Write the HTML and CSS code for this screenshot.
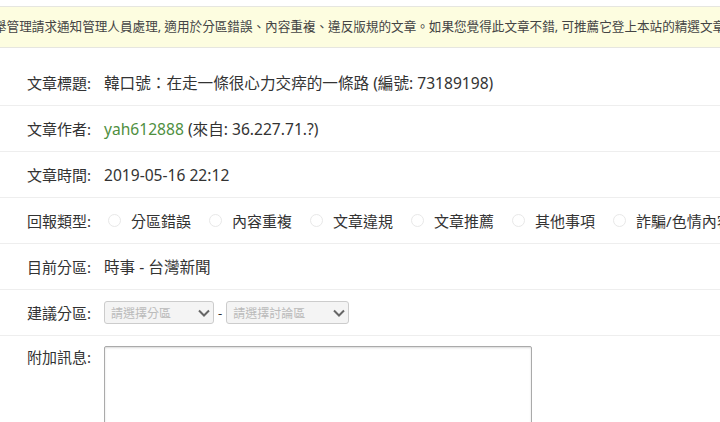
FILE: index.html
```html
<!DOCTYPE html>
<html>
<head>
    <meta charset="utf-8">
    <title>管理請求</title>
    <link rel="stylesheet" href="styles.css">
</head>
<body>
    <div class="notice">舉管理請求通知管理人員處理, 適用於分區錯誤、內容重複、違反版規的文章。如果您覺得此文章不錯, 可推薦它登上本站的精選文章。</div>

    <form class="report">
        <div class="row">
            <span class="label">文章標題:</span>
            <span class="value">韓口號：在走一條很心力交瘁的一條路 (編號: 73189198)</span>
        </div>
        <div class="row">
            <span class="label">文章作者:</span>
            <span class="value"><a class="author" href="#">yah612888</a> (來自: 36.227.71.?)</span>
        </div>
        <div class="row">
            <span class="label">文章時間:</span>
            <span class="value">2019-05-16 22:12</span>
        </div>
        <div class="row">
            <span class="label">回報類型:</span>
            <div class="options">
                <label class="option"><input type="radio" name="type">分區錯誤</label>
                <label class="option"><input type="radio" name="type">內容重複</label>
                <label class="option"><input type="radio" name="type">文章違規</label>
                <label class="option"><input type="radio" name="type">文章推薦</label>
                <label class="option"><input type="radio" name="type">其他事項</label>
                <label class="option"><input type="radio" name="type">詐騙/色情內容</label>
            </div>
        </div>
        <div class="row">
            <span class="label">目前分區:</span>
            <span class="value">時事 - 台灣新聞</span>
        </div>
        <div class="row">
            <span class="label">建議分區:</span>
            <div class="selects">
                <span class="select-wrap board">
                    <select disabled><option>請選擇分區</option></select>
                    <svg class="arrow" width="12" height="8" viewBox="0 0 12 8"><path d="M1 1.5 L6 6.5 L11 1.5" fill="none" stroke="#666" stroke-width="2"/></svg>
                </span>
                <span class="dash">-</span>
                <span class="select-wrap forum">
                    <select disabled><option>請選擇討論區</option></select>
                    <svg class="arrow" width="12" height="8" viewBox="0 0 12 8"><path d="M1 1.5 L6 6.5 L11 1.5" fill="none" stroke="#666" stroke-width="2"/></svg>
                </span>
            </div>
        </div>
        <div class="row row-top">
            <span class="label">附加訊息:</span>
            <textarea class="message"></textarea>
        </div>
    </form>
</body>
</html>
```

FILE: styles.css
```css
html, body {
    margin: 0;
    padding: 0;
    overflow: hidden;
}

body {
    background-color: #fff;
    color: #333;
    font-family: "Noto Sans", "Noto Sans CJK TC", sans-serif;
    font-size: 15px;
}

/* 上方提示 */
.notice {
    margin-top: 6px;
    height: 40px;
    line-height: 40px;
    background-color: #fdfde0;
    border-top: 1px solid #e6e6e0;
    border-bottom: 1px solid #e6e6e0;
    color: #444;
    font-size: 12.6px;
    white-space: nowrap;
    overflow: hidden;
    text-indent: -6px;
}

.report {
    padding-top: 12px;
}

.row {
    display: flex;
    align-items: center;
    height: 45px;
    border-bottom: 1px solid #eee;
    padding-left: 27px;
    white-space: nowrap;
}

.row-top {
    align-items: flex-start;
    height: auto;
    padding-top: 10px;
    border-bottom: none;
}

.label {
    width: 77px;
    flex-shrink: 0;
    line-height: 22px;
}

.value {
    line-height: 22px;
    font-size: 15.6px;
}

.author {
    color: #4f8f3f;
    text-decoration: none;
}

.options {
    display: flex;
    align-items: center;
}

.option {
    display: flex;
    align-items: center;
    margin-right: 14px;
}

.option input {
    appearance: none;
    -webkit-appearance: none;
    width: 13px;
    height: 13px;
    margin: 0 10px 0 4px;
    border: 1px solid #e8e8e8;
    border-radius: 50%;
    background-color: #fff;
}

.selects {
    display: flex;
    align-items: center;
}

.select-wrap {
    position: relative;
    display: inline-block;
}

.select-wrap select {
    appearance: none;
    -webkit-appearance: none;
    display: block;
    height: 23px;
    padding: 0 0 0 6px;
    border: 1px solid #ccc;
    border-radius: 3px;
    background-color: #f4f4f4;
    color: #bbb;
    font-family: "Noto Sans CJK TC", sans-serif;
    font-size: 12px;
    opacity: 1;
}

.board select {
    width: 110px;
}

.forum select {
    width: 123px;
}

.arrow {
    position: absolute;
    right: 4px;
    top: 8px;
}

.dash {
    margin: 0 4px;
    font-size: 13px;
}

.message {
    width: 428px;
    height: 100px;
    margin: 0;
    padding: 4px;
    box-sizing: border-box;
    border: 1px solid #aaa;
    border-radius: 2px;
    box-shadow: inset 0 1px 2px rgba(0, 0, 0, 0.15);
    resize: none;
}
```
